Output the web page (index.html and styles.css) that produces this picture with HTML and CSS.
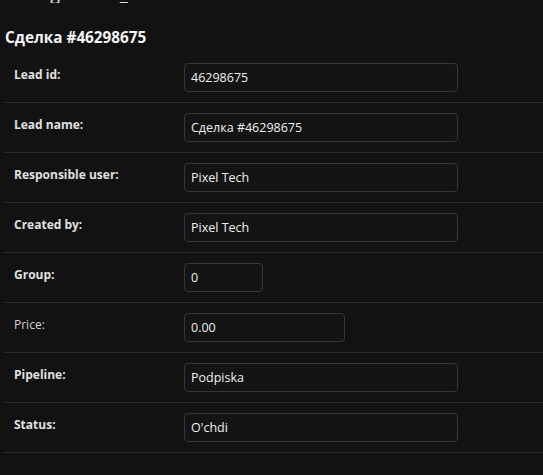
FILE: index.html
```html
<!DOCTYPE html>
<html>
<head>
<meta charset="utf-8">
<link rel="stylesheet" href="styles.css">
</head>
<body>
<div class="page">
  <div class="clipped-title">Debug details_</div>
  <h2 class="title">Сделка #46298675</h2>
  <div class="rows">
    <div class="row"><div class="label">Lead id:</div><div class="field"><div class="input wide">46298675</div></div></div>
    <div class="row"><div class="label">Lead name:</div><div class="field"><div class="input wide">Сделка #46298675</div></div></div>
    <div class="row"><div class="label">Responsible user:</div><div class="field"><div class="input wide">Pixel Tech</div></div></div>
    <div class="row"><div class="label">Created by:</div><div class="field"><div class="input wide">Pixel Tech</div></div></div>
    <div class="row"><div class="label">Group:</div><div class="field"><div class="input small">0</div></div></div>
    <div class="row"><div class="label normal">Price:</div><div class="field"><div class="input medium">0.00</div></div></div>
    <div class="row"><div class="label">Pipeline:</div><div class="field"><div class="input wide">Podpiska</div></div></div>
    <div class="row"><div class="label">Status:</div><div class="field"><div class="input wide">O'chdi</div></div></div>
  </div>
</div>
</body>
</html>
```

FILE: styles.css
```css
html, body {
  margin: 0;
  padding: 0;
  background: #121212;
}
body {
  font-family: "Open Sans", "Noto Sans", sans-serif;
  color: #e6e6e6;
  overflow: hidden;
}
.page {
  padding-left: 4px;
}
.clipped-title {
  font-size: 18px;
  line-height: 20px;
  margin-top: -17px;
  height: 20px;
  padding-left: 1px;
  color: #e0e0e0;
  overflow: hidden;
}
.title {
  margin: 0;
  padding: 24px 0 0 1px;
  font-size: 15.3px;
  line-height: 20px;
  font-weight: 700;
  color: #f4f4f4;
  height: 26px;
}
.rows {
  display: flex;
  flex-direction: column;
}
.row {
  display: grid;
  grid-template-columns: 180px 1fr;
  height: 49px;
  border-bottom: 1px solid #2b2b2b;
  align-items: start;
}
.label {
  padding: 12px 0 0 10px;
  font-size: 12px;
  line-height: 20px;
  font-weight: 700;
  color: #e0e0e0;
}
.label.normal {
  font-weight: 400;
  color: #d4d4d4;
}
.field {
  padding-top: 10px;
}
.input {
  box-sizing: border-box;
  height: 29px;
  border: 1px solid #363636;
  border-radius: 4px;
  background: #141414;
  padding: 0 6px;
  font-size: 12.5px;
  line-height: 27px;
  color: #f0f0f0;
}
.input.wide { width: 274px; }
.input.small { width: 79px; }
.input.medium { width: 161px; }
```
